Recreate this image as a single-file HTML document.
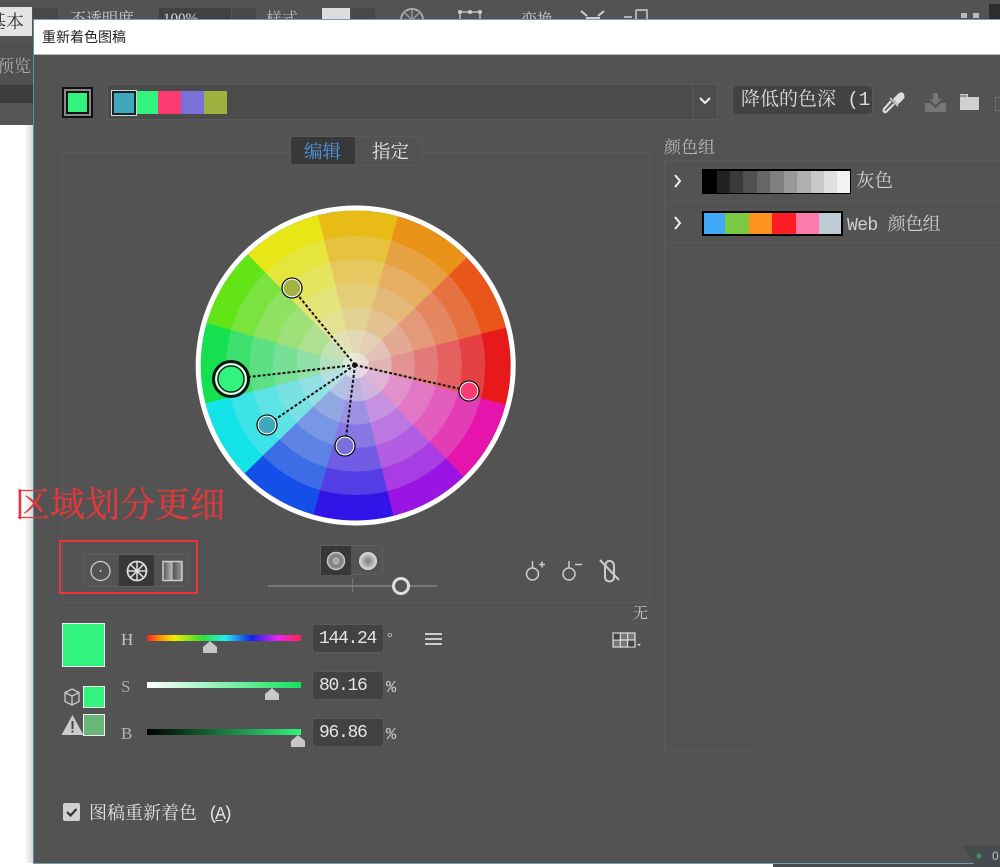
<!DOCTYPE html>
<html><head><meta charset="utf-8">
<style>
html,body{margin:0;padding:0;background:#fff}
#p{position:relative;width:1000px;height:867px;overflow:hidden;background:#fff;font-family:"Liberation Serif","Noto Serif CJK SC",serif}
#p div,#p span.a{position:absolute;box-sizing:border-box}
.t{white-space:nowrap;line-height:1}
.inp{background:#424242;border-radius:3px;box-shadow:0 0 0 1px #5a5a5a;color:#e4e4e4;font-size:18px;letter-spacing:-1.300px;padding-left:6px;line-height:28px;font-family:"Liberation Mono",monospace}
.ln{border:1px solid #5a5a5a}
.m{font-family:"Liberation Mono",monospace}
</style></head><body><div id="p">
<!-- background app chrome -->
<div style="left:0;top:0;width:1000px;height:44px;background:#535353"></div>
<div style="left:0;top:7px;width:32px;height:29px;background:#e4e4e4"></div>
<div class="t" style="left:-12px;top:13px;font-size:18px;color:#333">基本</div>
<div style="left:33px;top:8px;width:25px;height:28px;background:#484848"></div>
<div class="t" style="left:70px;top:12px;font-size:16px;color:#ccc">不透明度</div>
<div style="left:159px;top:8px;width:72px;height:28px;background:#424242"></div>
<div class="t" style="left:163px;top:12px;font-size:15px;color:#ddd">100%</div>
<div style="left:232px;top:8px;width:24px;height:28px;background:#484848"></div>
<div class="t" style="left:266px;top:12px;font-size:16px;color:#bbb">样式</div>
<div style="left:322px;top:8px;width:28px;height:25px;background:#ddd"></div>
<div style="left:351px;top:8px;width:24px;height:28px;background:#484848"></div>
<div class="t" style="left:521px;top:13px;font-size:16px;color:#ccc">变换</div>
<svg style="position:absolute;left:398px;top:6px" width="30" height="14"><circle cx="14" cy="14" r="11" fill="none" stroke="#aaa" stroke-width="2"/><path d="M14 3V14M6 6L14 14M22 6L14 14" stroke="#999" stroke-width="1.500"/></svg>
<svg style="position:absolute;left:456px;top:8px" width="28" height="12"><path d="M4 4H24M4 4V12M24 4V12" fill="none" stroke="#bbb" stroke-width="1.500"/><circle cx="4" cy="4" r="2" fill="#ccc"/><circle cx="24" cy="4" r="2" fill="#ccc"/><circle cx="14" cy="4" r="2" fill="#ccc"/></svg>
<svg style="position:absolute;left:578px;top:8px" width="30" height="12"><path d="M3 3l6 5M26 3l-6 5M8 10H22" fill="none" stroke="#ccc" stroke-width="2"/></svg>
<svg style="position:absolute;left:622px;top:8px" width="40" height="12"><path d="M2 9H10M14 2H25V12M14 2V12" fill="none" stroke="#ccc" stroke-width="1.500"/></svg>
<div style="left:961px;top:13px;width:6px;height:5px;background:#bbb"></div>
<div style="left:973px;top:13px;width:6px;height:5px;background:#bbb"></div>
<div style="left:989px;top:4px;width:11px;height:15px;background:#2e2e2e"></div>
<div style="left:0;top:44px;width:33px;height:41px;background:#505050"></div>
<div class="t" style="left:-3px;top:58px;font-size:17px;color:#aaa">预览</div>
<div style="left:0;top:85px;width:33px;height:18px;background:#3c3c3c"></div>
<div style="left:0;top:103px;width:33px;height:22px;background:#555"></div>
<div style="left:24px;top:125px;width:9px;height:738px;background:linear-gradient(90deg,#fff,#d8d8d8)"></div>
<div style="left:773px;top:864px;width:227px;height:3px;background:#474b50"></div>

<!-- dialog -->
<div style="left:33px;top:19px;width:967px;height:845px;background:#535353;border-top:1px solid #6fa3bd;border-left:1px solid #5f8ea3;border-bottom:1px solid #6fa0b0"></div>
<div style="left:34px;top:20px;width:966px;height:35px;background:#fff;border-bottom:1px solid #b5b8ba"></div>
<div class="t" style="left:42px;top:30px;font-size:14px;color:#222;font-family:'Liberation Sans','Noto Sans CJK SC',sans-serif">重新着色图稿</div>

<!-- active colour -->
<div style="left:62px;top:87px;width:31px;height:31px;background:#8a8a8a;border:2px solid #111"></div>
<div style="left:66px;top:91px;width:23px;height:23px;background:#32f37e;border:2px solid #111"></div>
<!-- colour strip -->
<div class="ln" style="left:107px;top:84px;width:586px;height:36px;background:#4b4b4b"></div>
<div class="ln" style="left:692px;top:84px;width:26px;height:36px;background:#4d4d4d"></div>
<svg style="position:absolute;left:697px;top:95px" width="16" height="12"><path d="M3 3l5 5 5-5" fill="none" stroke="#eee" stroke-width="2"/></svg>
<div style="left:136px;top:91px;width:23px;height:23px;background:#32f37e"></div>
<div style="left:158px;top:91px;width:24px;height:23px;background:#fc3a74"></div>
<div style="left:181px;top:91px;width:23px;height:23px;background:#7a70d9"></div>
<div style="left:204px;top:91px;width:23px;height:23px;background:#9fb13f"></div>
<div style="left:112px;top:91px;width:24px;height:24px;background:#3fa8bc;border:2px solid #222;box-shadow:0 0 0 1px #cfd8d8"></div>
<!-- name field -->
<div style="left:733px;top:86px;width:139px;height:28px;background:#424242;border-radius:3px;box-shadow:0 0 0 1px #5a5a5a;overflow:hidden"><span class="t" style="position:absolute;left:8px;top:5px;font-size:19px;color:#dcdcdc;font-family:'Liberation Mono','Noto Serif CJK SC',monospace">降低的色深 (1)</span></div>
<!-- eyedropper etc -->
<svg style="position:absolute;left:880px;top:90px" width="28" height="26"><path d="M11 11L4 19c-1 2 0 3.500 2 3l8-8" fill="none" stroke="#ddd" stroke-width="2.200"/><path d="M10 8l8 8M14 9l5-5c2-1.500 4-1 4.500 1s.5 2.500-1 4L18 13.500z" fill="#ddd" stroke="#ddd" stroke-width="1.500"/></svg>
<svg style="position:absolute;left:924px;top:92px" width="24" height="22"><path d="M9 1h5v6h4l-6.500 6L5 7h4z" fill="#767676"/><path d="M1 11h5l5.500 5 5.500-5h5v9H1z" fill="#767676"/></svg>
<svg style="position:absolute;left:958px;top:92px" width="26" height="20"><path d="M2 2h8v3h11v13H2z" fill="#d0d0d0"/><rect x="2" y="3.500" width="7" height="1" fill="#535353"/></svg>
<div style="left:995px;top:97px;width:5px;height:14px;border:1px solid #707070;border-right:0"></div>

<!-- tabs -->
<div class="ln" style="left:62px;top:152px;width:588px;height:451px;border-color:#5a5a5a;background:#535353"></div>
<div style="left:290px;top:136px;width:133px;height:30px;background:#535353;border:1px solid #5a5a5a;border-radius:3px"></div>
<div style="left:291px;top:137px;width:64px;height:27px;background:#383838;border-radius:2px"></div>
<div class="t" style="left:304px;top:144px;font-size:18.500px;color:#4f97e4">编辑</div>
<div class="t" style="left:372px;top:144px;font-size:18.500px;color:#e8e8e8">指定</div>

<!-- wheel -->
<svg style="position:absolute;left:190px;top:200px" width="330" height="330" viewBox="-165 -165 330 330">
<g transform="translate(.7 .5)">
<g fill="none" stroke-width="155">
<circle r="77.500" pathLength="12" stroke-dasharray="1.030 10.970" stroke="#e8191b" transform="rotate(-15)"/>
<circle r="77.500" pathLength="12" stroke-dasharray="1.030 10.970" stroke="#e8561a" transform="rotate(-45)"/>
<circle r="77.500" pathLength="12" stroke-dasharray="1.030 10.970" stroke="#e89318" transform="rotate(-75)"/>
<circle r="77.500" pathLength="12" stroke-dasharray="1.030 10.970" stroke="#e8bb17" transform="rotate(-105)"/>
<circle r="77.500" pathLength="12" stroke-dasharray="1.030 10.970" stroke="#e8e616" transform="rotate(-135)"/>
<circle r="77.500" pathLength="12" stroke-dasharray="1.030 10.970" stroke="#62e417" transform="rotate(-165)"/>
<circle r="77.500" pathLength="12" stroke-dasharray="1.030 10.970" stroke="#14e050" transform="rotate(165)"/>
<circle r="77.500" pathLength="12" stroke-dasharray="1.030 10.970" stroke="#14e4e8" transform="rotate(135)"/>
<circle r="77.500" pathLength="12" stroke-dasharray="1.030 10.970" stroke="#1450e8" transform="rotate(105)"/>
<circle r="77.500" pathLength="12" stroke-dasharray="1.030 10.970" stroke="#3314e8" transform="rotate(75)"/>
<circle r="77.500" pathLength="12" stroke-dasharray="1.030 10.970" stroke="#9a14e4" transform="rotate(45)"/>
<circle r="77.500" pathLength="12" stroke-dasharray="1.030 10.970" stroke="#e414ac" transform="rotate(15)"/>
</g>
<g fill="#e0e0e0">
<circle r="129.500" opacity=".2"/>
<circle r="106" opacity=".2"/>
<circle r="82.500" opacity=".2"/>
<circle r="59" opacity=".25"/>
<circle r="36" opacity=".45"/>
<circle r="13" fill="#eef0ee" opacity=".6"/>
</g>
<circle r="157.500" fill="none" stroke="#fff" stroke-width="5"/>
</g>
<g stroke="#111" stroke-width="2" stroke-dasharray="3 2" fill="none">
<path d="M0 0L-63 -77"/><path d="M0 0L-124 14"/><path d="M0 0L-88 60"/><path d="M0 0L-10 81"/><path d="M0 0L114 26"/>
</g>
<circle r="2.500" fill="#111"/>
<g stroke="#fff" stroke-width="1.300">
<circle cx="-63" cy="-77" r="9" fill="#a2b341"/><circle cx="-63" cy="-77" r="10" fill="none" stroke="#111" stroke-width="1.300"/>
<circle cx="-88" cy="60" r="9" fill="#3fa8bc"/><circle cx="-88" cy="60" r="10" fill="none" stroke="#111" stroke-width="1.300"/>
<circle cx="-10" cy="81" r="9" fill="#7a70d9"/><circle cx="-10" cy="81" r="10" fill="none" stroke="#111" stroke-width="1.300"/>
<circle cx="114" cy="26" r="9" fill="#fc3a74"/><circle cx="114" cy="26" r="10" fill="none" stroke="#111" stroke-width="1.300"/>
</g>
<circle cx="-124" cy="14" r="17.500" fill="none" stroke="#111" stroke-width="3"/>
<circle cx="-124" cy="14" r="15" fill="#32f37e" stroke="#fff" stroke-width="1.600"/>
<circle cx="-124" cy="14" r="13" fill="none" stroke="#111" stroke-width="1.200"/>
</svg>

<!-- annotation -->
<div class="t" style="left:15px;top:488px;font-size:35px;color:#e2393c;-webkit-text-stroke:.3px #e2393c">区域划分更细</div>
<div style="left:59px;top:540px;width:139px;height:54px;border:2px solid #e8363c"></div>

<!-- mode buttons -->
<div style="left:83px;top:554px;width:106px;height:33px;border:1px solid #5e5e5e;border-radius:3px"></div>
<div style="left:119px;top:555px;width:35px;height:31px;background:#383838"></div>
<svg style="position:absolute;left:88px;top:558px" width="95" height="26">
<circle cx="12.500" cy="13" r="9.500" fill="none" stroke="#ccc" stroke-width="1.300"/><circle cx="12.500" cy="13" r="1" fill="#ccc"/>
<circle cx="49" cy="13" r="9.500" fill="none" stroke="#ddd" stroke-width="1.800"/>
<path d="M49 3.500V22.500M39.500 13H58.500M42.300 6.300L55.700 19.700M55.700 6.300L42.300 19.700" stroke="#ddd" stroke-width="1.500"/>
<defs><linearGradient id="g1"><stop offset="0" stop-color="#555"/><stop offset=".5" stop-color="#bbb"/><stop offset=".52" stop-color="#555"/><stop offset="1" stop-color="#999"/></linearGradient></defs>
<rect x="75" y="3.500" width="19" height="19" fill="url(#g1)" stroke="#ccc" stroke-width="1.500"/>
</svg>
<div style="left:320px;top:545px;width:63px;height:30px;border:1px solid #5e5e5e;border-radius:2px"></div>
<div style="left:321px;top:546px;width:30px;height:29px;background:#383838"></div>
<svg style="position:absolute;left:324px;top:549px" width="58" height="24">
<circle cx="12" cy="12" r="8.500" fill="#8a8a8a" stroke="#c8c8c8" stroke-width="1.500"/><circle cx="12" cy="12" r="4.500" fill="#aaa" stroke="#777"/>
<defs><radialGradient id="g2"><stop offset="0" stop-color="#777"/><stop offset="1" stop-color="#ddd"/></radialGradient></defs>
<circle cx="44" cy="12" r="9" fill="url(#g2)"/>
</svg>
<div style="left:268px;top:585px;width:169px;height:2px;background:#777"></div>
<div style="left:352px;top:578px;width:1px;height:14px;background:#777"></div>
<div style="left:392px;top:577px;width:18px;height:18px;border-radius:50%;background:#535353;border:3px solid #ddd"></div>

<svg style="position:absolute;left:520px;top:556px" width="105" height="30" fill="none" stroke="#ccc" stroke-width="1.500">
<circle cx="12.500" cy="18" r="6"/><path d="M12.500 12V5M19 8.500h6M22 5.500v6"/>
<circle cx="49" cy="18" r="6"/><path d="M49 12V5M55 8.500h7"/>
<path d="M85 11c0-8 9-8 9-1v11c0 6-9 6-9 0z" stroke-width="2"/><path d="M80 4l19 20" stroke-width="2"/>
</svg>
<div class="t" style="left:633px;top:607px;font-size:15px;color:#ccc">无</div>
<svg style="position:absolute;left:612px;top:632px" width="30" height="16"><rect x="1" y="1" width="22" height="14" fill="#777" stroke="#ddd" stroke-width="1.200"/><path d="M8.300 1V15M15.600 1V15M1 8H23" stroke="#ddd" stroke-width="1.200"/><rect x="1.600" y="1.600" width="6" height="6" fill="#444"/><rect x="16.300" y="8.600" width="6" height="6" fill="#444"/><path d="M25 12h4l-2 2z" fill="#ddd"/></svg>

<!-- HSB -->
<div style="left:62px;top:623px;width:43px;height:44px;background:#32f37e;border:1px solid #eee"></div>
<svg style="position:absolute;left:62px;top:687px" width="20" height="20" fill="none" stroke="#ccc" stroke-width="1.300"><path d="M10 2l7 3.500v9L10 18l-7-3.500v-9zM3 5.500l7 3.500 7-3.500M10 9v9"/></svg>
<div style="left:83px;top:686px;width:22px;height:22px;background:#32f37e;border:1px solid #eee"></div>
<svg style="position:absolute;left:61px;top:714px" width="23" height="22"><path d="M11.500 1L22.500 21H.5z" fill="#ccc"/><rect x="10.500" y="7" width="2" height="8" fill="#444"/><rect x="10.500" y="16.500" width="2" height="2" fill="#444"/></svg>
<div style="left:83px;top:714px;width:22px;height:22px;background:#6ab578;border:1px solid #eee"></div>

<div class="t" style="left:121px;top:631px;font-size:17px;color:#c4c4c4">H</div>
<div class="t" style="left:121px;top:678px;font-size:17px;color:#aaa">S</div>
<div class="t" style="left:121px;top:725px;font-size:17px;color:#b4b4b4">B</div>
<div style="left:147px;top:635px;width:154px;height:6px;background:linear-gradient(90deg,#f22,#f90,#ee0 18%,#3d3 36%,#2ee 51%,#12e 68%,#e2e 85%,#f25)"></div>
<div style="left:147px;top:682px;width:154px;height:6px;background:linear-gradient(90deg,#fff,#14e060)"></div>
<div style="left:147px;top:729px;width:154px;height:6px;background:linear-gradient(90deg,#000,#32f37e)"></div>
<svg style="position:absolute;left:200px;top:640px" width="20" height="14"><path d="M3 13V7l7-6 7 6v6z" fill="#c8c8c8"/></svg>
<svg style="position:absolute;left:262px;top:687px" width="20" height="14"><path d="M3 13V7l7-6 7 6v6z" fill="#c8c8c8"/></svg>
<svg style="position:absolute;left:288px;top:734px" width="20" height="14"><path d="M3 13V7l7-6 7 6v6z" fill="#c8c8c8"/></svg>
<div class="inp" style="left:313px;top:625px;width:70px;height:27px">144.24</div>
<div class="inp" style="left:313px;top:672px;width:70px;height:27px">80.16</div>
<div class="inp" style="left:313px;top:719px;width:70px;height:27px">96.86</div>
<div class="t" style="left:387px;top:632px;font-size:14px;color:#ccc">°</div>
<div class="t m" style="left:386px;top:680px;font-size:17px;color:#ccc">%</div>
<div class="t m" style="left:386px;top:727px;font-size:17px;color:#ccc">%</div>
<div style="left:425px;top:633px;width:17px;height:2px;background:#ccc"></div>
<div style="left:425px;top:638px;width:17px;height:2px;background:#ccc"></div>
<div style="left:425px;top:643px;width:17px;height:2px;background:#ccc"></div>

<!-- colour groups -->
<div class="t" style="left:664px;top:139px;font-size:17px;color:#b8b8b8">颜色组</div>
<div style="left:664px;top:160px;width:336px;height:591px;border:1px solid #5a5a5a;border-right:0;border-bottom:0"></div>
<div style="left:665px;top:750px;width:88px;height:1px;background:#5a5a5a"></div>
<div style="left:665px;top:201px;width:335px;height:1px;background:#5a5a5a"></div>
<div style="left:665px;top:242px;width:335px;height:1px;background:#5a5a5a"></div>
<svg style="position:absolute;left:672px;top:173px" width="12" height="16"><path d="M3 2l5 6-5 6" fill="none" stroke="#eee" stroke-width="2"/></svg>
<svg style="position:absolute;left:672px;top:215px" width="12" height="16"><path d="M3 2l5 6-5 6" fill="none" stroke="#eee" stroke-width="2"/></svg>
<div style="left:702px;top:169px;width:149px;height:25px;border:1px solid #000;background:#000;display:block;overflow:hidden">
<svg width="149" height="23" style="display:block;margin:1px 0 0 1px"><rect width="14" height="23" fill="#000"/><rect x="13" width="14" height="23" fill="#222"/><rect x="26" width="14" height="23" fill="#3a3a3a"/><rect x="39" width="14" height="23" fill="#505050"/><rect x="53" width="14" height="23" fill="#666"/><rect x="66" width="15" height="23" fill="#808080"/><rect x="80" width="14" height="23" fill="#999"/><rect x="93" width="14" height="23" fill="#b0b0b0"/><rect x="107" width="14" height="23" fill="#c8c8c8"/><rect x="120" width="14" height="23" fill="#e0e0e0"/><rect x="133" width="14" height="23" fill="#f2f2f2"/></svg>
</div>
<div style="left:702px;top:211px;width:141px;height:25px;background:#000"></div>
<div style="left:704px;top:213px;width:22px;height:21px;background:#3fa9f5"></div>
<div style="left:725px;top:213px;width:25px;height:21px;background:#7ac943"></div>
<div style="left:749px;top:213px;width:23px;height:21px;background:#ff931e"></div>
<div style="left:772px;top:213px;width:24px;height:21px;background:#ff1d25"></div>
<div style="left:796px;top:213px;width:23px;height:21px;background:#ff7bac"></div>
<div style="left:819px;top:213px;width:22px;height:21px;background:#bdccd4"></div>
<div class="t" style="left:856px;top:173px;font-size:18.500px;color:#d0d0d0">灰色</div>
<div class="t" style="left:847px;top:217px;font-size:18px;letter-spacing:-.6px;color:#cfcfcf;font-family:'Liberation Mono','Noto Serif CJK SC',monospace">Web 颜色组</div>

<!-- checkbox -->
<div style="left:63px;top:803px;width:17px;height:18px;background:#d0d0d0;border-radius:2px"></div>
<svg style="position:absolute;left:63px;top:803px" width="17" height="18"><path d="M4 9l3.500 3.500L13.500 6" fill="none" stroke="#333" stroke-width="2.200"/></svg>
<div class="t" style="left:89px;top:806px;font-size:18px;color:#e2e2e2;font-family:'Liberation Mono','Noto Serif CJK SC',monospace">图稿重新着色 <span style="letter-spacing:-3.500px">(<span style="text-decoration:underline">A</span>)</span></div>

<!-- corner badge -->
<svg style="position:absolute;left:960px;top:843px" width="40" height="21"><path d="M3 3H40V21H14z" fill="#474b4f"/><path d="M19 10l3 3-3 3-3-3z" fill="#3f9a5e"/></svg>
<div class="t" style="left:992px;top:850px;font-size:12px;color:#bbb;font-family:'Liberation Sans',sans-serif">0</div>
</div></body></html>
